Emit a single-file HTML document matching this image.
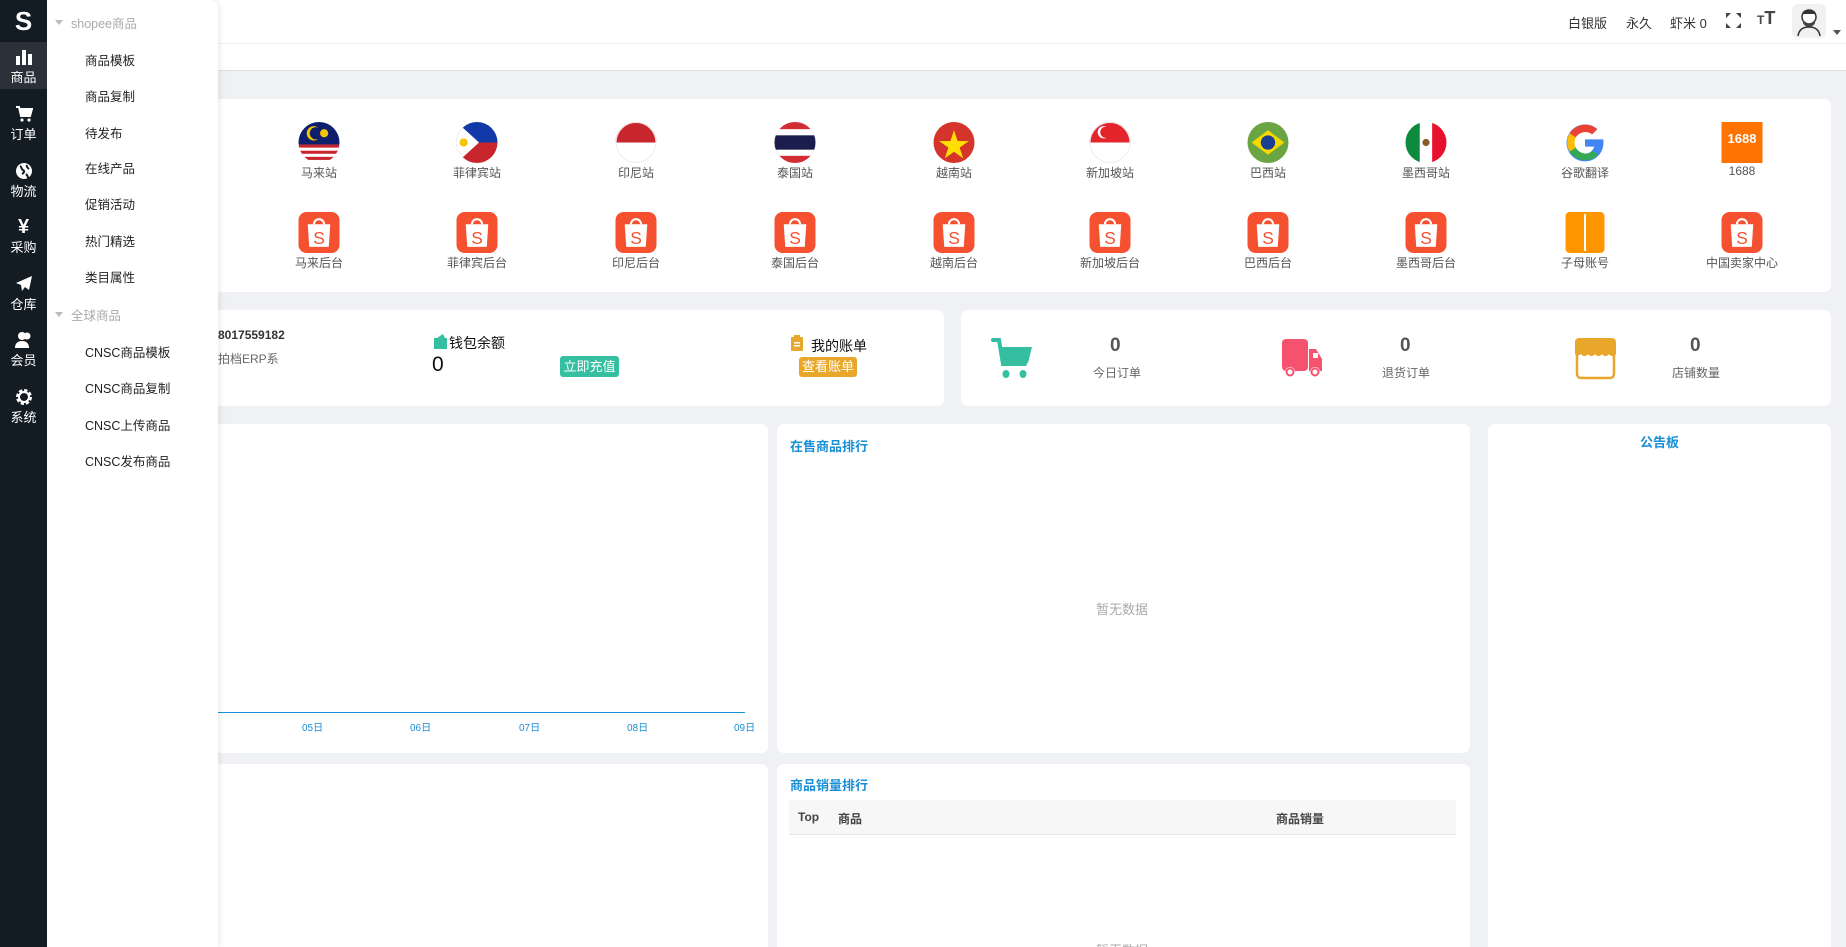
<!DOCTYPE html>
<html><head><meta charset="utf-8">
<style>
*{margin:0;padding:0;box-sizing:border-box}
html{width:1846px;height:947px;overflow:hidden}
body{width:1846px;height:947px;overflow:hidden;background:#f0f1f5;font-family:"Liberation Sans","Noto Sans CJK SC",sans-serif;position:relative;color:#333}
.abs{position:absolute}
.card{position:absolute;background:#fff;border-radius:7px}
.side{left:0;top:0;width:47px;height:947px;background:#131b23;z-index:5}
.side .it{position:absolute;left:0;width:47px;height:56px;color:#fff;font-size:13px;text-align:center}
.side .it svg{display:block;margin:6px auto 1px}
.menu{left:47px;top:0;width:171px;height:947px;background:#fff;z-index:4;box-shadow:2px 0 6px rgba(0,0,0,.08);border-radius:0 8px 0 0}
.menu div{position:absolute;left:38px;font-size:12.5px;color:#222}
.menu .g{left:8px;color:#aaa}
.menu .g:before{content:"";display:inline-block;border:4px solid transparent;border-top:5px solid #bbb;margin-right:8px;vertical-align:-1px}
.ic{position:absolute;width:41px;height:41px;transform:translateX(-50%)}
.lb{position:absolute;font-size:12px;color:#555;transform:translateX(-50%);white-space:nowrap}
.t{font-size:13px;color:#1a8fd6;font-weight:bold}
</style></head><body>

<div class="abs side">
 <div class="abs" style="left:0;top:0;width:47px;height:42px;color:#fff;font-weight:bold;font-size:26px;text-align:center;line-height:42px;font-family:'Liberation Sans',sans-serif">S</div>
 <div class="it" style="top:42px;height:47px;background:#2a3139"><svg width="18" height="18" viewBox="0 0 18 18"><rect x="1" y="8" width="4" height="9" fill="#fff"/><rect x="7" y="2" width="4" height="15" fill="#fff"/><rect x="13" y="6" width="4" height="11" fill="#fff"/></svg>商品</div>
 <div class="it" style="top:99px"><svg width="18" height="18" viewBox="0 0 18 18"><path d="M1 2h3l2 9h9l2-7H5" fill="none" stroke="#fff" stroke-width="2"/><rect x="5" y="5" width="11" height="6" fill="#fff"/><circle cx="7" cy="15" r="1.6" fill="#fff"/><circle cx="14" cy="15" r="1.6" fill="#fff"/></svg>订单</div>
 <div class="it" style="top:156px"><svg width="18" height="18" viewBox="0 0 18 18"><circle cx="9" cy="9" r="8" fill="#fff"/><path d="M5 4c2 1 1 3 3 4s1 3-1 4M12 3c-1 2 1 3 2 4M11 12c1 1 2 2 2 4" stroke="#131b23" stroke-width="2" fill="none"/></svg>物流</div>
 <div class="it" style="top:212px"><div style="font-size:20px;line-height:20px;margin-top:5px;font-weight:bold">¥</div>采购</div>
 <div class="it" style="top:269px"><svg width="18" height="18" viewBox="0 0 18 18"><path d="M17 1L1 8l5 2 1 6 3-4 4 3z" fill="#fff"/></svg>仓库</div>
 <div class="it" style="top:325px"><svg width="18" height="18" viewBox="0 0 18 18"><circle cx="7" cy="5" r="4" fill="#fff"/><path d="M0 17c0-5 3-7 7-7s7 2 7 7z" fill="#fff"/><circle cx="12" cy="5" r="3.5" fill="#fff"/></svg>会员</div>
 <div class="it" style="top:382px"><svg width="18" height="18" viewBox="0 0 18 18"><circle cx="9" cy="9" r="6" fill="none" stroke="#fff" stroke-width="4" stroke-dasharray="3 1.7"/><circle cx="9" cy="9" r="5" fill="none" stroke="#fff" stroke-width="2"/></svg>系统</div>
</div>

<div class="abs menu">
 <div class="g" style="top:13px">shopee商品</div>
 <div style="top:50px">商品模板</div>
 <div style="top:86px">商品复制</div>
 <div style="top:123px">待发布</div>
 <div style="top:158px">在线产品</div>
 <div style="top:194px">促销活动</div>
 <div style="top:231px">热门精选</div>
 <div style="top:267px">类目属性</div>
 <div class="g" style="top:305px">全球商品</div>
 <div style="top:342px">CNSC商品模板</div>
 <div style="top:378px">CNSC商品复制</div>
 <div style="top:415px">CNSC上传商品</div>
 <div style="top:451px">CNSC发布商品</div>
</div>

<div class="abs" style="left:47px;top:0;width:1799px;height:44px;background:#fff;border-bottom:1px solid #f0f0f0"></div>
<div class="abs" style="left:47px;top:44px;width:1799px;height:27px;background:#fff;border-bottom:1px solid #dcdee3"></div>
<div class="abs" style="left:1568px;top:13px;font-size:13px;color:#333">白银版</div>
<div class="abs" style="left:1626px;top:13px;font-size:13px;color:#333">永久</div>
<div class="abs" style="left:1670px;top:13px;font-size:13px;color:#333">虾米 0</div>
<svg class="abs" style="left:1725px;top:12px" width="17" height="17" viewBox="0 0 17 17" fill="#444"><path d="M1 1h5L1 6zM16 1h-5l5 5zM1 16h5l-5-5zM16 16h-5l5-5z"/></svg>
<div class="abs" style="left:1757px;top:8px;font-size:18px;font-weight:bold;color:#444"><span style="font-size:12px">T</span>T</div>
<div class="abs" style="left:1792px;top:4px;width:34px;height:34px;border-radius:6px;background:#f1f1f1">
 <svg width="34" height="34" viewBox="0 0 34 34"><circle cx="17" cy="13" r="7" fill="#fff" stroke="#333" stroke-width="1.5"/><path d="M10 10c1-6 13-6 14 0" fill="#333"/><path d="M11 15c1 6 11 6 12 0v4c-2 5-10 5-12 0z" fill="#444"/><path d="M6 32c1-7 6-9 11-9s10 2 11 9" fill="none" stroke="#333" stroke-width="1.5"/></svg>
</div>
<div class="abs" style="left:1833px;top:30px;border:4px solid transparent;border-top:5px solid #555"></div>

<div class="card" style="left:48px;top:99px;width:1783px;height:193px"></div>
<svg class="ic" style="left:319px;top:122px" viewBox="0 0 40 40"><defs><clipPath id="c"><circle cx="20" cy="20" r="20"/></clipPath></defs><g clip-path="url(#c)"><rect width="40" height="40" fill="#fff"/><rect width="40" height="22" fill="#0f1f6b"/><rect y="22" width="40" height="3" fill="#c7262d"/><rect y="28" width="40" height="3" fill="#c7262d"/><rect y="34" width="40" height="3" fill="#c7262d"/><circle cx="15" cy="11" r="7" fill="#f5c400"/><circle cx="17" cy="11" r="6" fill="#0f1f6b"/><circle cx="25" cy="11" r="4" fill="#f5c400"/></g></svg>
<svg class="ic" style="left:477px;top:122px" viewBox="0 0 40 40"><g clip-path="url(#c)"><rect width="40" height="20" fill="#1239a8"/><rect y="20" width="40" height="20" fill="#c7262d"/><path d="M0 0L22 20L0 40z" fill="#fff"/><circle cx="7" cy="20" r="4" fill="#f5c400"/></g></svg>
<svg class="ic" style="left:636px;top:122px" viewBox="0 0 40 40"><g clip-path="url(#c)"><rect width="40" height="40" fill="#fff"/><rect width="40" height="20" fill="#c7262d"/></g><circle cx="20" cy="20" r="19.5" fill="none" stroke="#eee"/></svg>
<svg class="ic" style="left:795px;top:122px" viewBox="0 0 40 40"><g clip-path="url(#c)"><rect width="40" height="40" fill="#d22c34"/><rect y="7" width="40" height="26" fill="#fff"/><rect y="13" width="40" height="14" fill="#1b1d4d"/></g></svg>
<svg class="ic" style="left:954px;top:122px" viewBox="0 0 40 40"><circle cx="20" cy="20" r="20" fill="#d5342a"/><path d="M20 8l3.5 10.5h11l-9 6.5 3.5 10.5-9-6.5-9 6.5 3.5-10.5-9-6.5h11z" fill="#ffde00"/></svg>
<svg class="ic" style="left:1110px;top:122px" viewBox="0 0 40 40"><g clip-path="url(#c)"><rect width="40" height="40" fill="#fff"/><rect width="40" height="20" fill="#e3242b"/><circle cx="14" cy="10" r="6" fill="#fff"/><circle cx="16" cy="10" r="5.5" fill="#e3242b"/></g><circle cx="20" cy="20" r="19.5" fill="none" stroke="#eee"/></svg>
<svg class="ic" style="left:1268px;top:122px" viewBox="0 0 40 40"><circle cx="20" cy="20" r="20" fill="#6aa443"/><path d="M4 20L20 8L36 20L20 32z" fill="#f5d800"/><circle cx="20" cy="20" r="7" fill="#1c3f94"/></svg>
<svg class="ic" style="left:1426px;top:122px" viewBox="0 0 40 40"><g clip-path="url(#c)"><rect width="14" height="40" fill="#0c8a3d"/><rect x="14" width="12" height="40" fill="#fff"/><rect x="26" width="14" height="40" fill="#e8112d"/><circle cx="20" cy="20" r="3.5" fill="#8b5a2b"/></g></svg>
<svg class="ic" style="left:1585px;top:122px" viewBox="0 0 40 40"><path d="M36 17H20v7h9c-1 4-5 7-9 7a11 11 0 1 1 7-19l5-5A18 18 0 1 0 38 20c0-1 0-2-.2-3z" fill="#4285f4"/><path d="M5 11l6 4a11 11 0 0 1 16-3l5-5A18 18 0 0 0 5 11z" fill="#ea4335"/><path d="M5 11a18 18 0 0 0 0 18l6-4a11 11 0 0 1 0-10z" fill="#fbbc05"/><path d="M5 29a18 18 0 0 0 28 3l-5-4a11 11 0 0 1-17-3z" fill="#34a853"/></svg>
<div class="ic" style="left:1742px;top:122px;background:#ff7300;color:#fff;font-weight:bold;font-size:13px;text-align:center;line-height:34px">1688</div>

<div class="lb" style="left:319px;top:164px">马来站</div>
<div class="lb" style="left:477px;top:164px">菲律宾站</div>
<div class="lb" style="left:636px;top:164px">印尼站</div>
<div class="lb" style="left:795px;top:164px">泰国站</div>
<div class="lb" style="left:954px;top:164px">越南站</div>
<div class="lb" style="left:1110px;top:164px">新加坡站</div>
<div class="lb" style="left:1268px;top:164px">巴西站</div>
<div class="lb" style="left:1426px;top:164px">墨西哥站</div>
<div class="lb" style="left:1585px;top:164px">谷歌翻译</div>
<div class="lb" style="left:1742px;top:164px">1688</div>

<svg width="0" height="0" style="position:absolute"><defs><symbol id="bag" viewBox="0 0 40 40"><rect width="40" height="40" rx="8" fill="#f5502f"/><path d="M15 12a5 5 0 0 1 10 0" fill="none" stroke="#fff" stroke-width="2"/><path d="M9 12h22l-1.5 22h-19z" fill="#fff"/><text x="20" y="31" font-size="17" text-anchor="middle" fill="#f5502f" font-family="Liberation Sans,sans-serif">S</text></symbol></defs></svg>
<svg class="ic" style="left:319px;top:212px"><use href="#bag"/></svg>
<svg class="ic" style="left:477px;top:212px"><use href="#bag"/></svg>
<svg class="ic" style="left:636px;top:212px"><use href="#bag"/></svg>
<svg class="ic" style="left:795px;top:212px"><use href="#bag"/></svg>
<svg class="ic" style="left:954px;top:212px"><use href="#bag"/></svg>
<svg class="ic" style="left:1110px;top:212px"><use href="#bag"/></svg>
<svg class="ic" style="left:1268px;top:212px"><use href="#bag"/></svg>
<svg class="ic" style="left:1426px;top:212px"><use href="#bag"/></svg>
<svg class="ic" style="left:1585px;top:212px" viewBox="0 0 40 40"><rect x="1" width="38" height="40" rx="4" fill="#ff9500"/><rect x="19" y="2" width="2" height="36" fill="#fff"/></svg>
<svg class="ic" style="left:1742px;top:212px"><use href="#bag"/></svg>

<div class="lb" style="left:319px;top:254px">马来后台</div>
<div class="lb" style="left:477px;top:254px">菲律宾后台</div>
<div class="lb" style="left:636px;top:254px">印尼后台</div>
<div class="lb" style="left:795px;top:254px">泰国后台</div>
<div class="lb" style="left:954px;top:254px">越南后台</div>
<div class="lb" style="left:1110px;top:254px">新加坡后台</div>
<div class="lb" style="left:1268px;top:254px">巴西后台</div>
<div class="lb" style="left:1426px;top:254px">墨西哥后台</div>
<div class="lb" style="left:1585px;top:254px">子母账号</div>
<div class="lb" style="left:1742px;top:254px">中国卖家中心</div>

<div class="card" style="left:48px;top:310px;width:896px;height:96px"></div>
<div class="abs" style="left:218px;top:328px;font-size:12px;font-weight:bold;color:#333">8017559182</div>
<div class="abs" style="left:218px;top:350px;font-size:12px;color:#666">拍档ERP系</div>
<svg class="abs" style="left:434px;top:334px" width="14" height="15" viewBox="0 0 14 15"><rect y="4" width="13" height="11" fill="#35bfa0"/><path d="M3 4l6-4 2 4" fill="#35bfa0"/></svg>
<div class="abs" style="left:449px;top:333px;font-size:14px;color:#111">钱包余额</div>
<div class="abs" style="left:432px;top:353px;font-size:21px;color:#111">0</div>
<div class="abs" style="left:560px;top:356px;width:59px;height:21px;background:#35bfa0;border-radius:3px;color:#fff;font-size:13px;text-align:center;line-height:21px">立即充值</div>
<svg class="abs" style="left:791px;top:335px" width="12" height="16" viewBox="0 0 12 16"><rect y="2" width="12" height="14" rx="1" fill="#e8a72a"/><rect x="3" y="0" width="6" height="4" fill="#e8a72a"/><rect x="3" y="7" width="6" height="1.5" fill="#fff"/><rect x="3" y="10" width="6" height="1.5" fill="#fff"/></svg>
<div class="abs" style="left:811px;top:336px;font-size:14px;color:#111">我的账单</div>
<div class="abs" style="left:799px;top:357px;width:58px;height:20px;background:#e8a72a;border-radius:3px;color:#fff;font-size:13px;text-align:center;line-height:20px">查看账单</div>

<div class="card" style="left:961px;top:310px;width:870px;height:96px"></div>
<svg class="abs" style="left:991px;top:337px" width="43" height="43" viewBox="0 0 43 43"><path d="M2 3h6l4 24h22" fill="none" stroke="#35bfa0" stroke-width="4" stroke-linecap="round"/><path d="M9 10h32l-4 16H12z" fill="#35bfa0"/><ellipse cx="15" cy="37" rx="3.5" ry="4" fill="#35bfa0"/><ellipse cx="32" cy="37" rx="3.5" ry="4" fill="#35bfa0"/></svg>
<div class="abs" style="left:1110px;top:335px;font-size:19px;font-weight:bold;color:#555">0</div>
<div class="abs" style="left:1093px;top:364px;font-size:12px;color:#666">今日订单</div>
<svg class="abs" style="left:1281px;top:337px" width="43" height="43" viewBox="0 0 43 43"><rect x="1" y="2" width="26" height="32" rx="4" fill="#f4526e"/><path d="M28 12h7l6 10v12H28z" fill="#f4526e"/><rect x="32" y="16" width="5" height="5" fill="#fff"/><circle cx="9" cy="35" r="5" fill="#fff"/><circle cx="9" cy="35" r="3.5" fill="none" stroke="#f4526e" stroke-width="2"/><circle cx="34" cy="35" r="5" fill="#fff"/><circle cx="34" cy="35" r="3.5" fill="none" stroke="#f4526e" stroke-width="2"/></svg>
<div class="abs" style="left:1400px;top:335px;font-size:19px;font-weight:bold;color:#555">0</div>
<div class="abs" style="left:1382px;top:364px;font-size:12px;color:#666">退货订单</div>
<svg class="abs" style="left:1574px;top:337px" width="43" height="43" viewBox="0 0 43 43"><rect x="3" y="10" width="37" height="31" rx="4" fill="none" stroke="#e8a72a" stroke-width="2.5"/><path d="M1 5a4 4 0 0 1 4-4h33a4 4 0 0 1 4 4v12a4 4 0 0 1-7 0 4 4 0 0 1-7 0 4 4 0 0 1-7 0 4 4 0 0 1-7 0 4 4 0 0 1-7 0 4 4 0 0 1-6 0z" fill="#e8a72a"/></svg>
<div class="abs" style="left:1690px;top:335px;font-size:19px;font-weight:bold;color:#555">0</div>
<div class="abs" style="left:1672px;top:364px;font-size:12px;color:#666">店铺数量</div>

<div class="card" style="left:48px;top:424px;width:720px;height:329px"></div>
<div class="abs" style="left:218px;top:712px;width:527px;height:1px;background:#1a8fd6"></div>
<div class="abs" style="left:302px;top:719px;font-size:10px;color:#1a8fd6">05日</div>
<div class="abs" style="left:410px;top:719px;font-size:10px;color:#1a8fd6">06日</div>
<div class="abs" style="left:519px;top:719px;font-size:10px;color:#1a8fd6">07日</div>
<div class="abs" style="left:627px;top:719px;font-size:10px;color:#1a8fd6">08日</div>
<div class="abs" style="left:734px;top:719px;font-size:10px;color:#1a8fd6">09日</div>

<div class="card" style="left:777px;top:424px;width:693px;height:329px"></div>
<div class="abs t" style="left:790px;top:436px">在售商品排行</div>
<div class="abs" style="left:1096px;top:599px;font-size:13px;color:#aaa">暂无数据</div>

<div class="card" style="left:1488px;top:424px;width:343px;height:523px;border-radius:7px 7px 0 0"></div>
<div class="abs t" style="left:1640px;top:432px">公告板</div>

<div class="card" style="left:48px;top:764px;width:720px;height:183px;border-radius:7px 7px 0 0"></div>
<div class="card" style="left:777px;top:764px;width:693px;height:183px;border-radius:7px 7px 0 0"></div>
<div class="abs t" style="left:790px;top:775px">商品销量排行</div>
<div class="abs" style="left:789px;top:800px;width:667px;height:35px;background:#f7f7f7;border-bottom:1px solid #e8e8e8"></div>
<div class="abs" style="left:798px;top:810px;font-size:12px;font-weight:bold;color:#444">Top</div>
<div class="abs" style="left:838px;top:810px;font-size:12px;font-weight:bold;color:#444">商品</div>
<div class="abs" style="left:1276px;top:810px;font-size:12px;font-weight:bold;color:#444">商品销量</div>
<div class="abs" style="left:1096px;top:940px;font-size:13px;color:#aaa">暂无数据</div>
</body></html>
